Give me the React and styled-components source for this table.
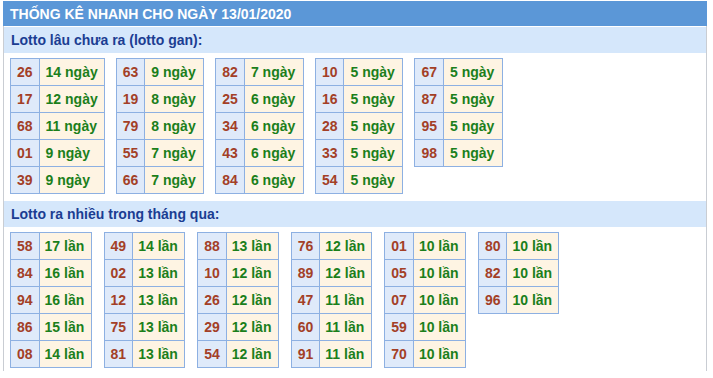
import React from 'react';
import styled, { createGlobalStyle } from 'styled-components';

const GlobalStyle = createGlobalStyle`
  body {
    margin: 0;
    background: #fff;
    font-family: "Liberation Sans", Arial, sans-serif;
  }
`;

const Box = styled.div`
  margin: 1px 0 0 3px;
  width: 702px;
  min-height: 370px;
  border-left: 1px solid #c9cdd3;
  border-right: 1px solid #c9cdd3;
`;

const Title = styled.div`
  height: 25px;
  margin-left: -1px;
  margin-right: -1px;
  padding-left: 7px;
  background: #5b97d7;
  color: #fff;
  font-size: 14px;
  font-weight: bold;
  line-height: 26px;
`;

const SectionHead = styled.div`
  margin-top: 1px;
  height: 26px;
  padding-left: 7px;
  background: #d5e7fb;
  color: #1b3d92;
  font-size: 14px;
  font-weight: bold;
  line-height: 26px;
`;

const Grid = styled.div`
  display: flex;
  align-items: flex-start;
  gap: ${p => p.$gap}px;
  padding: 5px 0 0 6px;
  margin-bottom: ${p => p.$bottom || 0}px;
`;

const Table = styled.table`
  border-collapse: collapse;
  border: 1px solid #8db0e2;
`;

const Num = styled.td`
  height: 26px;
  padding: 0 6px;
  border: 1px solid #8db0e2;
  background: #dfeafa;
  color: #a33f27;
  font-size: 14px;
  font-weight: bold;
  text-align: center;
`;

const Val = styled.td`
  height: 26px;
  min-width: ${p => p.$min}px;
  padding: 0 ${p => p.$pad}px;
  border: 1px solid #8db0e2;
  background: #fef4e3;
  color: #1b7f1b;
  font-size: 14px;
  font-weight: bold;
  text-align: left;
  white-space: nowrap;
`;

const gan = [
  [['26', 14], ['17', 12], ['68', 11], ['01', 9], ['39', 9]],
  [['63', 9], ['19', 8], ['79', 8], ['55', 7], ['66', 7]],
  [['82', 7], ['25', 6], ['34', 6], ['43', 6], ['84', 6]],
  [['10', 5], ['16', 5], ['28', 5], ['33', 5], ['54', 5]],
  [['67', 5], ['87', 5], ['95', 5], ['98', 5]],
];

const nhieu = [
  [['58', 17], ['84', 16], ['94', 16], ['86', 15], ['08', 14]],
  [['49', 14], ['02', 13], ['12', 13], ['75', 13], ['81', 13]],
  [['88', 13], ['10', 12], ['26', 12], ['29', 12], ['54', 12]],
  [['76', 12], ['89', 12], ['47', 11], ['60', 11], ['91', 11]],
  [['01', 10], ['05', 10], ['07', 10], ['59', 10], ['70', 10]],
  [['80', 10], ['82', 10], ['96', 10]],
];

function StatTable({ rows, unit, min, pad }) {
  return (
    <Table>
      <tbody>
        {rows.map(([n, v]) => (
          <tr key={n}>
            <Num>{n}</Num>
            <Val $min={min} $pad={pad}>{v} {unit}</Val>
          </tr>
        ))}
      </tbody>
    </Table>
  );
}

export default function App() {
  return (
    <>
      <GlobalStyle />
      <Box>
        <Title>THỐNG KÊ NHANH CHO NGÀY 13/01/2020</Title>
        <SectionHead>Lotto lâu chưa ra (lotto gan):</SectionHead>
        <Grid $gap={11} $bottom={7}>
          {gan.map((rows, i) => (
            <StatTable key={i} rows={rows} unit="ngày" min={46} pad={6} />
          ))}
        </Grid>
        <SectionHead>Lotto ra nhiều trong tháng qua:</SectionHead>
        <Grid $gap={12}>
          {nhieu.map((rows, i) => (
            <StatTable key={i} rows={rows} unit="lần" min={41} pad={5} />
          ))}
        </Grid>
      </Box>
    </>
  );
}
